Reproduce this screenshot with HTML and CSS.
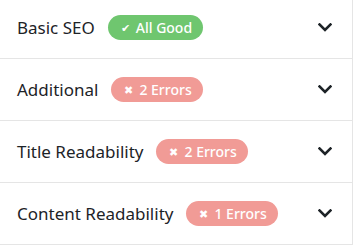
FILE: index.html
```html
<!DOCTYPE html>
<html lang="en">
<head>
    <meta charset="UTF-8">
    <meta name="viewport" content="width=device-width, initial-scale=1.0">
    <title>SEO Checks</title>
    <link rel="stylesheet" href="styles.css">
</head>
<body>
    <div class="checks">
        <div class="check-row">
            <span class="check-title">Basic SEO</span>
            <span class="badge badge-good"><span class="badge-icon">&#10004;</span>All Good</span>
            <svg class="chevron" viewBox="0 0 14 9" width="14" height="9"><path d="M1.5 1.5 L7 7 L12.5 1.5" /></svg>
        </div>
        <div class="check-row">
            <span class="check-title">Additional</span>
            <span class="badge badge-error"><span class="badge-icon">&#10006;</span>2 Errors</span>
            <svg class="chevron" viewBox="0 0 14 9" width="14" height="9"><path d="M1.5 1.5 L7 7 L12.5 1.5" /></svg>
        </div>
        <div class="check-row">
            <span class="check-title">Title Readability</span>
            <span class="badge badge-error"><span class="badge-icon">&#10006;</span>2 Errors</span>
            <svg class="chevron" viewBox="0 0 14 9" width="14" height="9"><path d="M1.5 1.5 L7 7 L12.5 1.5" /></svg>
        </div>
        <div class="check-row">
            <span class="check-title">Content Readability</span>
            <span class="badge badge-error"><span class="badge-icon">&#10006;</span>1 Errors</span>
            <svg class="chevron" viewBox="0 0 14 9" width="14" height="9"><path d="M1.5 1.5 L7 7 L12.5 1.5" /></svg>
        </div>
    </div>
</body>
</html>
```

FILE: styles.css
```css
body {
    margin: 0;
    background: #fff;
    font-family: 'Noto Sans', 'Open Sans', sans-serif;
    color: #1d2327;
}

.checks {
    border-right: 1px solid #e5e5e5;
    margin-top: -3px;
}

.check-row {
    display: flex;
    align-items: center;
    height: 61px;
    padding: 0 20px 0 17px;
    border-bottom: 1px solid #e5e5e5;
}

.check-title {
    font-size: 17px;
}

.badge {
    display: inline-flex;
    align-items: center;
    height: 25px;
    margin-left: 13px;
    padding: 0 11px 0 13px;
    border-radius: 13px;
    color: #fff;
    font-size: 14px;
    font-weight: 500;
}

.badge-icon {
    font-size: 11px;
    margin-right: 6px;
}

.badge-good {
    background: #6fc66f;
}

.badge-error {
    background: #f19b96;
}

.chevron {
    margin-left: auto;
    fill: none;
    stroke: #1d2327;
    stroke-width: 2.6;
    stroke-linecap: square;
}
```
